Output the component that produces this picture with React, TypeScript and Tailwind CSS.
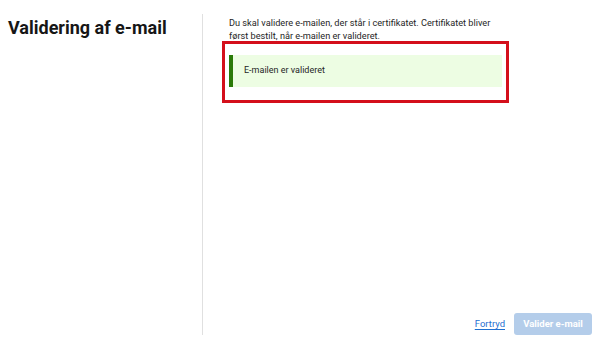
export default function App() {
  return (
    <div
      className="flex h-[350px] w-[600px] bg-white pt-[14px] pb-[15px] text-[#161616]"
      style={{ fontFamily: 'Roboto, "Liberation Sans", Arial, sans-serif' }}
    >
      {/* Left: page title */}
      <div className="w-[202px] shrink-0 pl-2">
        <h1 className="pt-[2px] text-[18px] font-bold leading-[24px]">Validering af e-mail</h1>
      </div>

      {/* Right: content + actions */}
      <div className="flex flex-1 flex-col border-l border-[#e0e0e0]">
        <div className="ml-[26px] w-[273px]">
          <p className="mt-[2px] text-[9.2px] leading-[13px] text-[#262626]">
            Du skal validere e-mailen, der står i certifikatet. Certifikatet bliver først bestilt, når e-mailen er
            valideret.
          </p>

          <div className="-mx-[7px] mt-[-1px] border-[3px] border-[#d40f1b] px-[4px] pt-[11px] pb-[13px]">
            <div className="flex h-[32px] items-center border-l-[4px] border-[#2a7a08] bg-[#edfde3] pl-[11px]">
              <span className="text-[9px] text-[#262626]">E-mailen er valideret</span>
            </div>
          </div>
        </div>

        <div className="mt-auto flex items-center justify-end gap-[9px] pr-2">
          <a href="#" className="text-[9.5px] text-[#1f6fd1] underline underline-offset-2">
            Fortryd
          </a>
          <button
            disabled
            className="h-[22px] w-[78px] rounded-[3px] bg-[#b4cdea] text-[9.5px] font-bold text-white"
          >
            Valider e-mail
          </button>
        </div>
      </div>
    </div>
  )
}
